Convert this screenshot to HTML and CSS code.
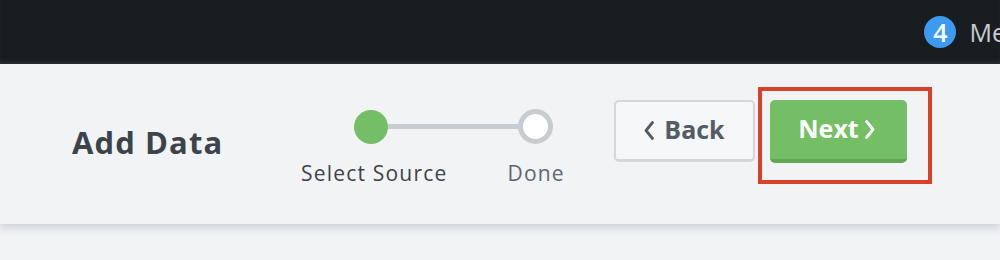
FILE: index.html
```html
<!DOCTYPE html>
<html>
<head>
<meta charset="utf-8">
<link rel="stylesheet" href="styles.css">
</head>
<body>
<div class="topbar">
  <div class="user">
    <span class="badge">4</span>
    <span class="menu">Me</span>
  </div>
</div>
<div class="panel">
  <h1 class="title">Add Data</h1>
  <div class="steps">
    <div class="track">
      <span class="dot done"></span>
      <span class="line"></span>
      <span class="dot todo"></span>
    </div>
    <div class="labels">
      <span class="label active">Select Source</span>
      <span class="label">Done</span>
    </div>
  </div>
  <div class="actions">
    <button class="btn back"><svg class="chev" viewBox="0 0 10 19" width="10" height="19"><path d="M8.5 1.5 L2 9.5 L8.5 17.5" fill="none" stroke="currentColor" stroke-width="2.8" stroke-linecap="round" stroke-linejoin="round"/></svg><span>Back</span></button>
    <div class="highlight">
      <button class="btn next"><span>Next</span><svg class="chev" viewBox="0 0 10 19" width="10" height="19"><path d="M1.5 1.5 L8 9.5 L1.5 17.5" fill="none" stroke="currentColor" stroke-width="2.8" stroke-linecap="round" stroke-linejoin="round"/></svg></button>
    </div>
  </div>
</div>
</body>
</html>
```
FILE: styles.css
```css
* { box-sizing: border-box; }
html, body { margin: 0; padding: 0; }
body {
  width: 1000px;
  height: 260px;
  overflow: hidden;
  background: #f2f3f5;
  font-family: "Open Sans", Lato, sans-serif;
}
.topbar {
  height: 64px;
  background: #1a1d20;
  display: flex;
  justify-content: flex-end;
  align-items: center;
  overflow: hidden;
  box-shadow: inset 0 -4px 4px -2px rgba(60,66,72,0.6);
}
.user {
  display: flex;
  align-items: center;
  gap: 13px;
  margin-right: -6px;
}
.badge {
  width: 32px;
  height: 32px;
  border-radius: 50%;
  background: #3c9bf0;
  color: #fff;
  font-size: 25px;
  font-weight: 600;
  display: flex;
  align-items: center;
  justify-content: center;
}
.menu {
  color: #c9ccd0;
  font-size: 25px;
  white-space: nowrap;
}
.panel {
  height: 160px;
  background: #f2f3f5;
  display: flex;
  align-items: center;
  box-shadow: 0 4px 8px rgba(40,60,90,0.18);
}
.title {
  margin: 0 0 0 72px;
  width: 229px;
  font-size: 31px;
  font-weight: 700;
  letter-spacing: 1.1px;
  color: #3c434a;
  padding-bottom: 4px;
}
.steps {
  display: flex;
  flex-direction: column;
  width: 300px;
  margin-top: 8px;
}
.track {
  display: flex;
  align-items: center;
  margin-left: 53px;
}
.dot {
  width: 34px;
  height: 34px;
  border-radius: 50%;
  flex: none;
}
.dot.done { background: #74bf66; }
.dot.todo { background: #fff; border: 5px solid #c7ccd1; width: 35px; height: 35px; }
.line {
  width: 130px;
  height: 5px;
  background: #c7ccd1;
}
.labels {
  display: flex;
  gap: 60px;
  margin-top: 15px;
}
.label {
  font-size: 21px;
  letter-spacing: 1.2px;
  color: #5d6670;
}
.label.active { color: #3c434a; }
.actions {
  display: flex;
  align-items: flex-start;
  margin-top: -18px;
  margin-left: 13px;
}
.btn {
  font-family: inherit;
  font-size: 25px;
  font-weight: 700;
  height: 62px;
  border-radius: 5px;
  cursor: pointer;
  display: flex;
  align-items: center;
  justify-content: center;
  gap: 10px;
  padding: 0;
}
.back {
  width: 141px;
  background: #f6f7f9;
  color: #545c65;
  border: 2px solid #d3d7dc;
  border-bottom-width: 3px;
  margin-top: 13px;
}
.highlight {
  margin-left: 3px;
  border: 4px solid #d9412b;
  padding: 9px 21px 17px 8px;
}
.next {
  width: 137px;
  height: 63px;
  background: #74bf66;
  color: #fff;
  border: none;
  border-bottom: 4px solid #62a655;
  gap: 6px;
  padding-right: 4px;
}
.btn span { margin-top: -2px; }
.chev { flex: none; }
```
